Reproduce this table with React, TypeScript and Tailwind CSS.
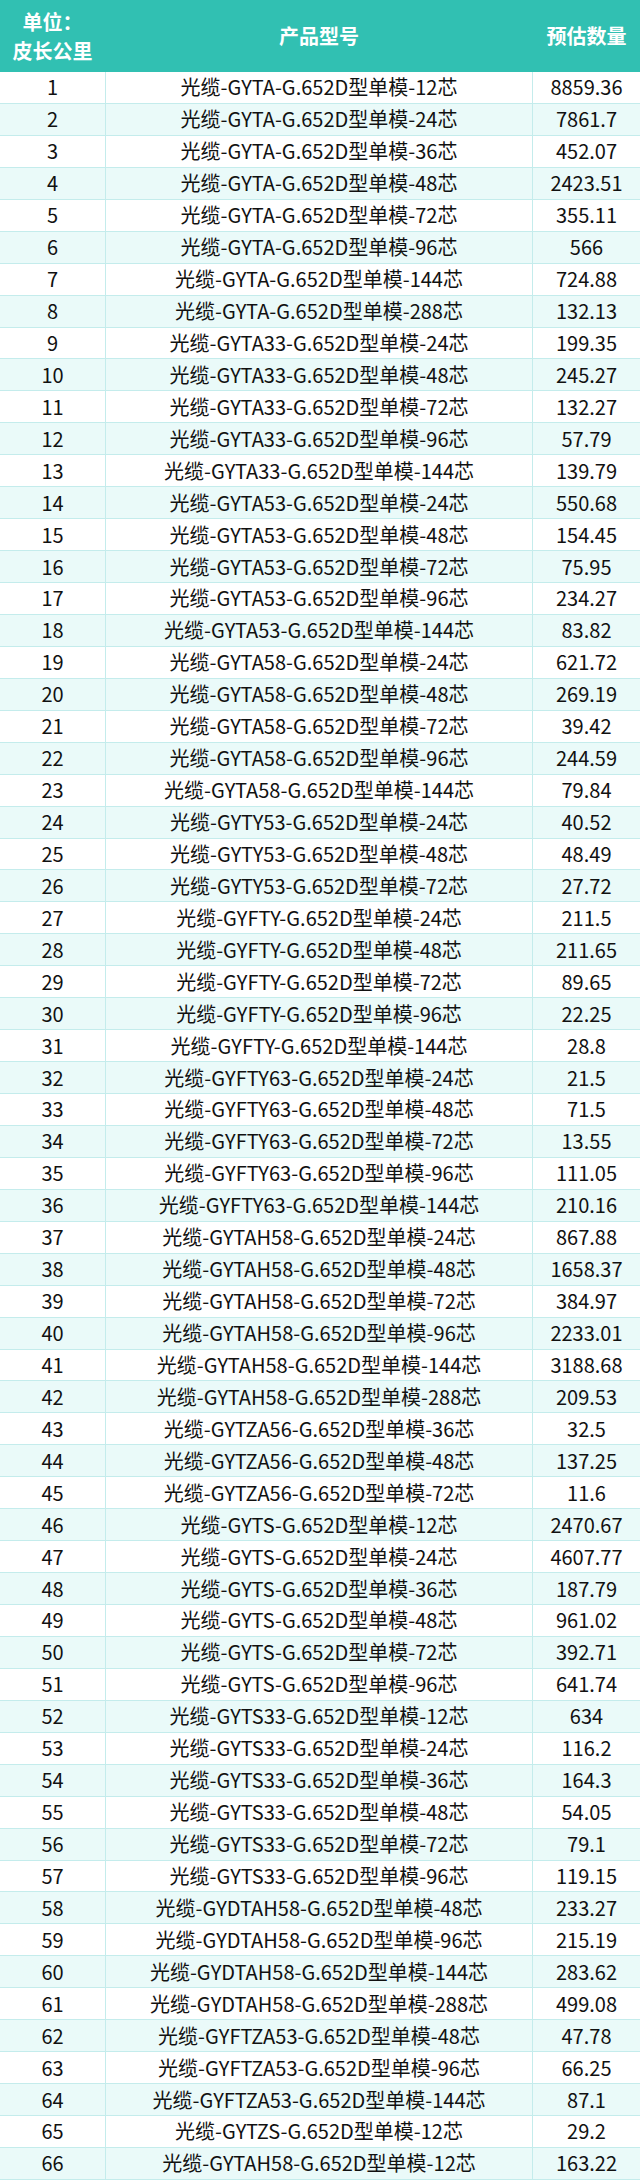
const rows: [string, string, string][] = [
  ['GYTA', '12', '8859.36'],
  ['GYTA', '24', '7861.7'],
  ['GYTA', '36', '452.07'],
  ['GYTA', '48', '2423.51'],
  ['GYTA', '72', '355.11'],
  ['GYTA', '96', '566'],
  ['GYTA', '144', '724.88'],
  ['GYTA', '288', '132.13'],
  ['GYTA33', '24', '199.35'],
  ['GYTA33', '48', '245.27'],
  ['GYTA33', '72', '132.27'],
  ['GYTA33', '96', '57.79'],
  ['GYTA33', '144', '139.79'],
  ['GYTA53', '24', '550.68'],
  ['GYTA53', '48', '154.45'],
  ['GYTA53', '72', '75.95'],
  ['GYTA53', '96', '234.27'],
  ['GYTA53', '144', '83.82'],
  ['GYTA58', '24', '621.72'],
  ['GYTA58', '48', '269.19'],
  ['GYTA58', '72', '39.42'],
  ['GYTA58', '96', '244.59'],
  ['GYTA58', '144', '79.84'],
  ['GYTY53', '24', '40.52'],
  ['GYTY53', '48', '48.49'],
  ['GYTY53', '72', '27.72'],
  ['GYFTY', '24', '211.5'],
  ['GYFTY', '48', '211.65'],
  ['GYFTY', '72', '89.65'],
  ['GYFTY', '96', '22.25'],
  ['GYFTY', '144', '28.8'],
  ['GYFTY63', '24', '21.5'],
  ['GYFTY63', '48', '71.5'],
  ['GYFTY63', '72', '13.55'],
  ['GYFTY63', '96', '111.05'],
  ['GYFTY63', '144', '210.16'],
  ['GYTAH58', '24', '867.88'],
  ['GYTAH58', '48', '1658.37'],
  ['GYTAH58', '72', '384.97'],
  ['GYTAH58', '96', '2233.01'],
  ['GYTAH58', '144', '3188.68'],
  ['GYTAH58', '288', '209.53'],
  ['GYTZA56', '36', '32.5'],
  ['GYTZA56', '48', '137.25'],
  ['GYTZA56', '72', '11.6'],
  ['GYTS', '12', '2470.67'],
  ['GYTS', '24', '4607.77'],
  ['GYTS', '36', '187.79'],
  ['GYTS', '48', '961.02'],
  ['GYTS', '72', '392.71'],
  ['GYTS', '96', '641.74'],
  ['GYTS33', '12', '634'],
  ['GYTS33', '24', '116.2'],
  ['GYTS33', '36', '164.3'],
  ['GYTS33', '48', '54.05'],
  ['GYTS33', '72', '79.1'],
  ['GYTS33', '96', '119.15'],
  ['GYDTAH58', '48', '233.27'],
  ['GYDTAH58', '96', '215.19'],
  ['GYDTAH58', '144', '283.62'],
  ['GYDTAH58', '288', '499.08'],
  ['GYFTZA53', '48', '47.78'],
  ['GYFTZA53', '96', '66.25'],
  ['GYFTZA53', '144', '87.1'],
  ['GYTZS', '12', '29.2'],
  ['GYTAH58', '12', '163.22'],
];

export default function App() {
  return (
    <div className="w-[640px] bg-white font-['Noto_Sans_CJK_SC','Noto_Sans',sans-serif] text-[20px] text-[#111]">
      <div className="grid h-[72px] grid-cols-[105px_428px_107px] bg-[#31c0b2] font-bold text-white">
        <div className="flex flex-col items-center justify-center leading-[29px]">
          <span>单位：</span>
          <span>皮长公里</span>
        </div>
        <div className="flex items-center justify-center">产品型号</div>
        <div className="flex items-center justify-center">预估数量</div>
      </div>
      {rows.map(([model, cores, qty], i) => (
        <div
          key={i}
          className={`grid h-[31.95px] grid-cols-[105px_428px_107px] border-b border-[#c4ecec] leading-none ${i % 2 === 1 ? 'bg-[#eafaf9]' : 'bg-white'}`}
        >
          <div className="flex items-center justify-center">{i + 1}</div>
          <div className="flex items-center justify-center border-x border-[#c4ecec]">
            光缆-{model}-G.652D型单模-{cores}芯
          </div>
          <div className="flex items-center justify-center">{qty}</div>
        </div>
      ))}
    </div>
  );
}
